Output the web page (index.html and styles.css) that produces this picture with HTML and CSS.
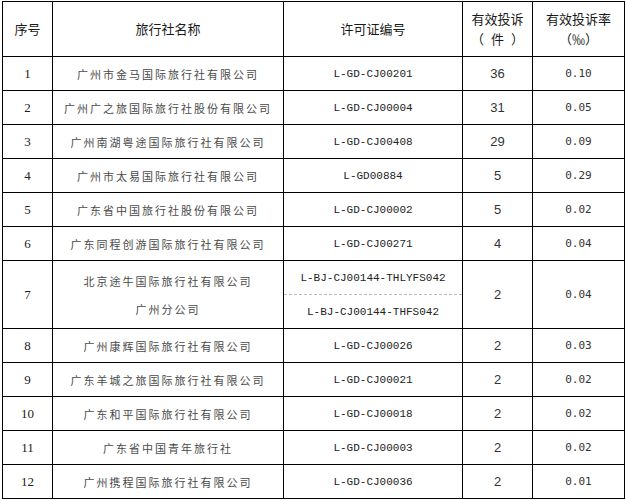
FILE: index.html
```html
<!DOCTYPE html>
<html lang="zh-CN">
<head>
<meta charset="utf-8">
<title>有效投诉</title>
<link rel="stylesheet" href="styles.css">
</head>
<body>
<table class="tbl">
  <colgroup>
    <col class="c1"><col class="c2"><col class="c3"><col class="c4"><col class="c5">
  </colgroup>
  <thead>
    <tr class="hrow">
      <th>序号</th>
      <th>旅行社名称</th>
      <th>许可证编号</th>
      <th>有效投诉<br>（<span class="unit">件</span>）</th>
      <th>有效投诉率<br>（‰）</th>
    </tr>
  </thead>
  <tbody>
    <tr><td class="num">1</td><td class="name">广州市金马国际旅行社有限公司</td><td class="lic">L-GD-CJ00201</td><td class="cnt">36</td><td class="rate">0.10</td></tr>
    <tr><td class="num">2</td><td class="name">广州广之旅国际旅行社股份有限公司</td><td class="lic">L-GD-CJ00004</td><td class="cnt">31</td><td class="rate">0.05</td></tr>
    <tr><td class="num">3</td><td class="name">广州南湖粤途国际旅行社有限公司</td><td class="lic">L-GD-CJ00408</td><td class="cnt">29</td><td class="rate">0.09</td></tr>
    <tr><td class="num">4</td><td class="name">广州市太易国际旅行社有限公司</td><td class="lic">L-GD00884</td><td class="cnt">5</td><td class="rate">0.29</td></tr>
    <tr><td class="num">5</td><td class="name">广东省中国旅行社股份有限公司</td><td class="lic">L-GD-CJ00002</td><td class="cnt">5</td><td class="rate">0.02</td></tr>
    <tr><td class="num">6</td><td class="name">广东同程创游国际旅行社有限公司</td><td class="lic">L-GD-CJ00271</td><td class="cnt">4</td><td class="rate">0.04</td></tr>
    <tr class="sub">
      <td class="num" rowspan="2">7</td>
      <td class="name two" rowspan="2">北京途牛国际旅行社有限公司<br>广州分公司</td>
      <td class="lic top">L-BJ-CJ00144-THLYFS042</td>
      <td class="cnt" rowspan="2">2</td>
      <td class="rate" rowspan="2">0.04</td>
    </tr>
    <tr class="sub"><td class="lic bot">L-BJ-CJ00144-THFS042</td></tr>
    <tr><td class="num">8</td><td class="name">广州康辉国际旅行社有限公司</td><td class="lic">L-GD-CJ00026</td><td class="cnt">2</td><td class="rate">0.03</td></tr>
    <tr><td class="num">9</td><td class="name">广东羊城之旅国际旅行社有限公司</td><td class="lic">L-GD-CJ00021</td><td class="cnt">2</td><td class="rate">0.02</td></tr>
    <tr><td class="num">10</td><td class="name">广东和平国际旅行社有限公司</td><td class="lic">L-GD-CJ00018</td><td class="cnt">2</td><td class="rate">0.02</td></tr>
    <tr><td class="num">11</td><td class="name">广东省中国青年旅行社</td><td class="lic">L-GD-CJ00003</td><td class="cnt">2</td><td class="rate">0.02</td></tr>
    <tr><td class="num">12</td><td class="name">广州携程国际旅行社有限公司</td><td class="lic">L-GD-CJ00036</td><td class="cnt">2</td><td class="rate">0.01</td></tr>
  </tbody>
</table>
</body>
</html>
```
FILE: styles.css
```css
html, body {
  margin: 0;
  padding: 0;
  background: #ffffff;
}
body {
  padding: 1px 0 0 2px;
  font-family: "Noto Sans CJK SC", "Liberation Sans", sans-serif;
  color: #333;
}
.tbl {
  border-collapse: collapse;
  table-layout: fixed;
  width: 622px;
}
.c1 { width: 50px; }
.c2 { width: 231px; }
.c3 { width: 179px; }
.c4 { width: 70px; }
.c5 { width: 92px; }
.tbl th, .tbl td {
  border: 1px solid #000;
  padding: 0;
  text-align: center;
  vertical-align: middle;
}
.tbl th {
  font-weight: 400;
  font-size: 13px;
  line-height: 20px;
  color: #1a1a1a;
  height: 54px;
}
.unit {
  margin: 0 7px;
}
.tbl td {
  height: 33px;
}
.tbl tr.sub td {
  height: 33px;
}
.num {
  font-family: "Liberation Serif", serif;
  font-size: 13px;
  color: #222;
}
.name {
  font-size: 11px;
  letter-spacing: 2px;
  color: #4a4a4a;
  line-height: 14px;
}
.name.two {
  line-height: 28px;
}
.lic {
  font-family: "Liberation Mono", monospace;
  font-size: 11px;
  color: #222;
}
.cnt {
  font-family: "Liberation Sans", sans-serif;
  font-size: 13px;
  color: #333;
}
.rate {
  font-family: "DejaVu Sans Mono", monospace;
  font-size: 11px;
  color: #333;
}
.tbl td.lic.top {
  border-bottom: 1px dashed #bdbdbd;
}
.tbl td.lic.bot {
  border-top: 1px dashed #bdbdbd;
}
```
